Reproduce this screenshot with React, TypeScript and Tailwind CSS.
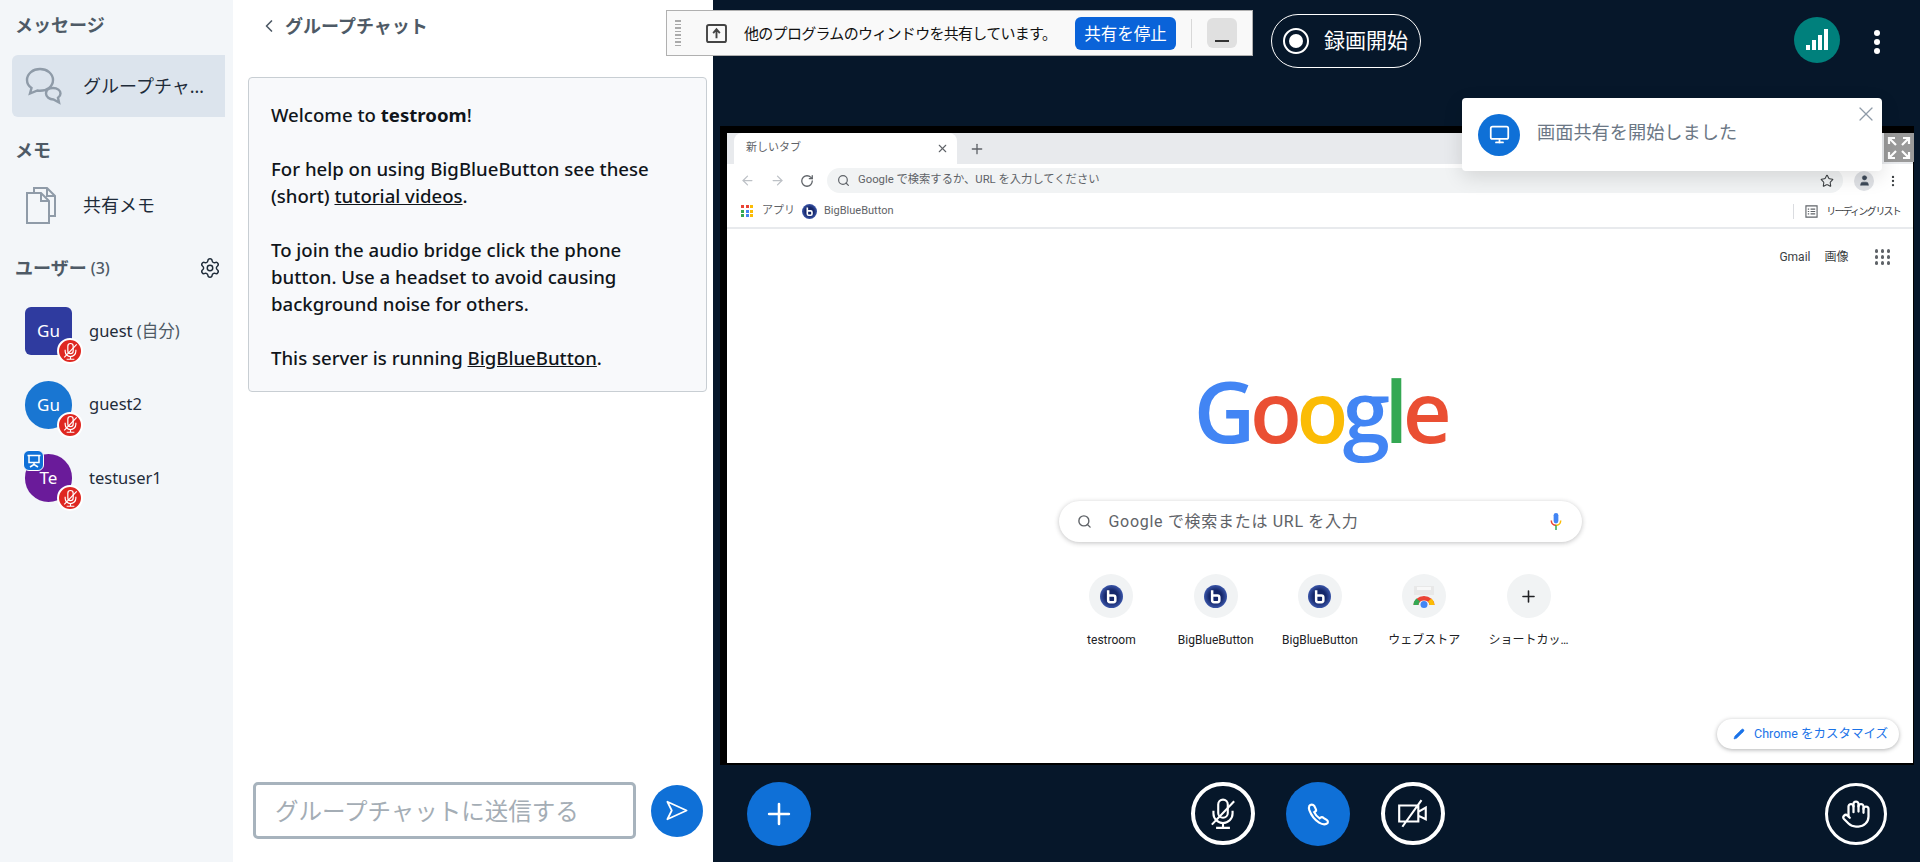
import React from "react";
import { ChevronLeft, Hand, Monitor, Search, Settings, Star, X, Plus, ArrowLeft, ArrowRight, RotateCw, User, EllipsisVertical, Pencil } from "lucide-react";

const MicOffIcon = ({ className }: { className?: string }) => (
  <svg viewBox="0 0 32 32" fill="none" stroke="currentColor" strokeWidth="2" className={className}>
    <rect x="11.5" y="2.5" width="9" height="17" rx="4.5" />
    <path d="M7 13v2.5a9 9 0 0 0 18 0V13M16 24.5V28M9.5 29h13M5.5 26 26.5 4" />
  </svg>
);

const CameraOffIcon = ({ className }: { className?: string }) => (
  <svg viewBox="0 0 32 32" fill="none" stroke="currentColor" strokeWidth="2" className={className}>
    <path d="M3 8h18v15H3zM21 14l7-4v11l-7-3.5M6 28 24 3" />
  </svg>
);

const PhoneIcon = () => (
  <svg viewBox="0 0 24 24" fill="none" stroke="white" strokeWidth="2" className="h-[26px] w-[26px]">
    <path d="M4 4.500C5 3 7.500 3 8.500 4.500L10 7.500C10.500 8.500 10 9.500 9 10L8.500 10.300C9.500 12.500 11 14.500 13.500 16L14 15.500C15 14.800 16.500 15 17 15.500L20 17.500C21.500 18.500 21.500 20.500 20 21C18 22 15.500 21.500 13 20C9 17.500 5.500 12.500 4 8.500C3.500 7 3.500 5.500 4 4.500Z" />
  </svg>
);

const ChatIcon = () => (
  <svg viewBox="0 0 38 38" fill="none" stroke="#8f9ba8" strokeWidth="2.4" className="h-[38px] w-[38px]">
    <path d="M15 2C8 2 2 6.500 2 13c0 3.500 2 6.300 4.500 8L5 26.500 12.500 23.500c1 .2 1.800.3 2.500.3 7 0 13-4.300 13-10.800S22 2 15 2z" />
    <path d="M28 21c4.500 0 7.500 2.500 7.500 5.500 0 1.800-1 3.300-2.500 4.300l1 4.700-5.500-3c-4 0-7.500-2.500-7.500-6s3-5.500 7-5.500z" fill="#dce4ed" />
  </svg>
);

const FilesIcon = () => (
  <svg viewBox="0 0 32 38" fill="none" stroke="#8f9ba8" strokeWidth="2" className="h-[38px] w-[32px]">
    <path d="M9 6V2h13l8 8v20h-6" />
    <path d="M22 2v8h8" />
    <path d="M2 7h14l8 8v22H2z" fill="#f3f6f9" />
    <path d="M16 7v8h8" />
  </svg>
);

const SendIcon = () => (
  <svg viewBox="0 0 26 24" fill="none" stroke="white" strokeWidth="2" className="h-[21px] w-[24px]">
    <path d="M2 2 24 12 2 22 7 12z" strokeLinejoin="round" />
  </svg>
);

const BbbLogo = ({ size }: { size: number }) => (
  <svg viewBox="0 0 24 24" width={size} height={size}>
    <defs>
      <radialGradient id="bbb-fill">
        <stop offset="0.55" stopColor="#15276a" />
        <stop offset="1" stopColor="#3a55a8" />
      </radialGradient>
    </defs>
    <circle cx="12" cy="12" r="12" fill="url(#bbb-fill)" />
    <path d="M8.500 5.500v10.500a2 2 0 0 0 2 2h3.500a2 2 0 0 0 2-2v-3a2 2 0 0 0-2-2H9" fill="none" stroke="white" strokeWidth="2.600" />
  </svg>
);

const WebStoreIcon = () => (
  <svg viewBox="0 0 24 24" className="h-[24px] w-[24px]">
    <rect x="2" y="2" width="20" height="9" fill="#e8e8e8" />
    <rect x="5" y="3" width="14" height="3" fill="#f8f8f8" />
    <path d="M1.500 21a10.500 9 0 0 1 10.500-9 10.500 9 0 0 1 10.500 9h-5a5.500 4.500 0 0 0-5.500-4.500A5.500 4.500 0 0 0 6.500 21z" fill="#ea4335" />
    <path d="M1.500 21a10.500 9 0 0 1 3-6.500l3.500 3a5.500 4.500 0 0 0-1.500 3.500z" fill="#34a853" />
    <path d="M22.500 21a10.500 9 0 0 0-3-6.500L16 17.500a5.500 4.500 0 0 1 1.500 3.500z" fill="#fbbc05" />
    <circle cx="12" cy="20.500" r="3.500" fill="#4285f4" />
  </svg>
);

const MutedBadge = () => (
  <div className="absolute right-[-11px] bottom-[-9px] flex h-[26px] w-[26px] items-center justify-center rounded-full border-2 border-white bg-[#df2721] text-white">
    <MicOffIcon className="h-[19px] w-[19px]" />
  </div>
);

const users = [
  { name: "guest", self: true, initials: "Gu", shape: "rounded-md bg-[#2f3b9f]" },
  { name: "guest2", self: false, initials: "Gu", shape: "rounded-full bg-[#1976d2]" },
  { name: "testuser1", self: false, initials: "Te", shape: "rounded-full bg-[#6a1b9a]", presenter: true },
];

const shortcuts = ["testroom", "BigBlueButton", "BigBlueButton", "ウェブストア", "ショートカッ…"];

const gridColors = ["#ea4335", "#ea4335", "#fbbc05", "#34a853", "#4285f4", "#fbbc05", "#34a853", "#4285f4", "#fbbc05"];

const RoundBtn = ({ children }: { children: React.ReactNode }) => (
  <div className="flex h-[63px] w-[64px] items-center justify-center rounded-full border-[4px] border-white text-white">{children}</div>
);

const ChromeWindow = () => (
  <div className="flex h-full flex-col bg-white font-['Roboto','Noto_Sans_CJK_JP',sans-serif] text-[#5f6368]">
    <div className="flex h-[31px] items-end bg-[#e8eaed] pl-[7px]">
      <div className="flex h-[31px] w-[223px] items-center justify-between rounded-t-lg bg-white pr-[8px] pl-[12px] text-[11px]">
        <span>新しいタブ</span>
        <X size={13} strokeWidth={2} />
      </div>
      <Plus size={16} strokeWidth={2} className="mb-[7px] ml-[12px]" />
    </div>
    <div className="flex h-[30px] items-center pt-[3px] pr-[13px] pl-[13px]">
      <ArrowLeft size={15} className="text-[#bdc1c6]" />
      <ArrowRight size={15} className="ml-[15px] text-[#bdc1c6]" />
      <RotateCw size={14} strokeWidth={2.2} className="ml-[15px]" />
      <div className="ml-[13px] flex h-[25px] flex-1 items-center rounded-full bg-[#f1f3f4] pl-[10px] text-[11.300px]">
        <Search size={13} strokeWidth={2.2} />
        <span className="ml-[8px]">Google で検索するか、URL を入力してください</span>
        <Star size={14} strokeWidth={1.8} className="mr-[9px] ml-auto text-[#3c4043]" />
      </div>
      <div className="ml-[11px] flex h-[20px] w-[20px] items-center justify-center rounded-full bg-[#dfe1e5]">
        <User size={13} fill="#3c4858" strokeWidth={1} className="text-[#3c4858]" />
      </div>
      <EllipsisVertical size={14} className="ml-[12px] text-[#3c4043]" />
    </div>
    <div className="flex h-[35px] items-center border-b-2 border-[#e8eaed] pt-[1px] pr-[13px] pl-[14px] text-[11px]">
      <div className="grid h-[12px] w-[12px] grid-cols-3 gap-[1.500px]">
        {gridColors.map((c, i) => (
          <div key={i} style={{ backgroundColor: c }} />
        ))}
      </div>
      <span className="ml-[9px]">アプリ</span>
      <span className="ml-[7px]"><BbbLogo size={15} /></span>
      <span className="ml-[7px]">BigBlueButton</span>
      <div className="ml-auto h-[15px] w-px bg-[#dadce0]" />
      <svg viewBox="0 0 14 14" fill="none" stroke="#5f6368" strokeWidth="1.200" className="ml-[11px] h-[13px] w-[13px]">
        <path d="M1 1h12v12H1zM3 4.500h1.500M6 4.500h5M3 7h1.500M6 7h5M3 9.500h1.500M6 9.500h5" />
      </svg>
      <span className="ml-[8px] text-[10px] tracking-[-1.800px] text-[#3c4043]">リーディング リスト</span>
    </div>
    <div className="relative flex flex-1 flex-col items-center">
      <div className="flex h-[56px] items-center self-end pr-[23px] text-[12px] text-[#3c4043]">
        <span>Gmail</span>
        <span className="ml-[14px]">画像</span>
        <div className="ml-[26px] grid grid-cols-3 gap-[2.500px]">
          {Array.from({ length: 9 }).map((_, i) => (
            <div key={i} className="h-[3.500px] w-[3.500px] rounded-full bg-[#5f6368]" />
          ))}
        </div>
      </div>
      <div className="mt-[80px] flex h-[90px] items-center font-['Open_Sans',sans-serif] text-[85px] leading-none font-semibold tracking-[-5.500px]">
        <span className="text-[#4285f4]">G</span>
        <span className="text-[#ea4f33]">o</span>
        <span className="text-[#fbbc05]">o</span>
        <span className="text-[#4285f4]">g</span>
        <span className="text-[#34a853]">l</span>
        <span className="text-[#ea4f33]">e</span>
      </div>
      <div className="mt-[46px] flex h-[41px] w-[523px] items-center rounded-full bg-white pr-[20px] pl-[18px] text-[16px] tracking-[0.7px] text-[#5f6368] shadow-[0_1px_5px_rgba(32,33,36,0.28)]">
        <Search size={15} strokeWidth={2.2} />
        <span className="ml-[17px]">Google で検索または URL を入力</span>
        <svg viewBox="0 0 12 18" className="ml-auto h-[17px] w-[12px]">
          <rect x="3.500" y="0" width="5" height="11" rx="2.500" fill="#4285f4" />
          <path d="M1 8a5 5 0 0 0 5 5" fill="none" stroke="#ea4335" strokeWidth="1.600" />
          <path d="M11 8a5 5 0 0 1-5 5" fill="none" stroke="#fbbc05" strokeWidth="1.600" />
          <path d="M6 13v5" stroke="#34a853" strokeWidth="1.600" />
        </svg>
      </div>
      <div className="mt-[32px] flex">
        {shortcuts.map((s, i) => (
          <div key={i} className="flex w-[104.300px] flex-col items-center">
            <div className="flex h-[44px] w-[44px] items-center justify-center rounded-full bg-[#f1f3f4]">
              {i < 3 && <BbbLogo size={23} />}
              {i === 3 && <WebStoreIcon />}
              {i === 4 && <Plus size={19} strokeWidth={2} className="text-[#202124]" />}
            </div>
            <span className="mt-[13px] text-[12px] text-[#202124]">{s}</span>
          </div>
        ))}
      </div>
      <div className="absolute right-[14px] bottom-[14px] flex h-[30px] w-[182px] items-center rounded-full bg-white pl-[16px] text-[12.500px] text-[#1a73e8] shadow-[0_1px_4px_rgba(32,33,36,0.35)]">
        <Pencil size={12} fill="#1a73e8" strokeWidth={1} />
        <span className="ml-[9px]">Chrome をカスタマイズ</span>
      </div>
    </div>
  </div>
);

const App = () => {
  return (
    <div className="relative flex h-[862px] w-[1920px] overflow-hidden font-['Noto_Sans','Noto_Sans_CJK_JP',sans-serif]">
      {/* sidebar */}
      <div className="flex w-[233px] flex-col bg-[#f3f6f9] text-[#1f2c3a]">
        <div className="flex h-[50px] items-center pl-[15px] text-[18px] font-bold text-[#4e5a66]">メッセージ</div>
        <div className="mt-[5px] ml-[12px] flex h-[62px] w-[213px] items-center rounded-l-[6px] bg-[#dce4ed] pl-[13px] text-[18px]">
          <ChatIcon />
          <span className="ml-[20px] w-[130px] truncate">グループチャット</span>
        </div>
        <div className="mt-[11px] flex h-[44px] items-center pl-[15px] text-[18px] font-bold text-[#4e5a66]">メモ</div>
        <div className="mt-[2px] ml-[12px] flex h-[62px] items-center pl-[13px] text-[18px]">
          <FilesIcon />
          <span className="ml-[26px]">共有メモ</span>
        </div>
        <div className="mt-[16px] flex h-[32px] items-center pr-[12px] pl-[15px] text-[#4e5a66]">
          <span className="text-[18px] font-bold">ユーザー</span>
          <span className="ml-[4px] text-[16px] font-medium">(3)</span>
          <Settings size={22} strokeWidth={1.6} className="ml-auto text-[#1f2c3a]" />
        </div>
        <div className="mt-[23px] flex flex-col gap-[25.500px] pl-[25px]">
          {users.map((u) => (
            <div key={u.name} className="flex h-[48px] items-center">
              <div className={`relative flex h-[48px] w-[47px] items-center justify-center text-[17px] text-white ${u.shape}`}>
                {u.initials}
                {u.presenter && (
                  <div className="absolute top-[-4px] left-[-2px] flex h-[21px] w-[21px] items-center justify-center rounded-md border border-white bg-[#0f70d7]">
                    <svg viewBox="0 0 16 16" fill="none" stroke="white" strokeWidth="1.500" className="h-[16px] w-[16px]">
                      <path d="M1.500 2.500h13M3 2.500v7h10v-7M8 9.500v2M4 14l4-2.500 4 2.500" />
                    </svg>
                  </div>
                )}
                <MutedBadge />
              </div>
              <span className="ml-[17px] text-[16.500px]">
                {u.name}
                {u.self && <span className="text-[#4e5a66]"> (自分)</span>}
              </span>
            </div>
          ))}
        </div>
      </div>

      {/* chat */}
      <div className="flex w-[480px] flex-col bg-white">
        <div className="flex h-[52px] items-center pl-[26px] text-[18px] font-bold text-[#4e5a66]">
          <ChevronLeft size={20} strokeWidth={2} />
          <span className="ml-[6px]">グループチャット</span>
        </div>
        <div className="mt-[25px] mr-[6px] ml-[15px] h-[315px] rounded border border-[#c8ced3] bg-[#f8f9fb] px-[22px] py-[23px] text-[18.600px] leading-[27px] font-medium text-[#10151a]">
          Welcome to <b>testroom</b>!<br />
          <br />
          For help on using BigBlueButton see these
          <br />
          (short) <u>tutorial videos</u>.<br />
          <br />
          To join the audio bridge click the phone
          <br />
          button. Use a headset to avoid causing
          <br />
          background noise for others.
          <br />
          <br />
          This server is running <u>BigBlueButton</u>.
        </div>
        <div className="mt-auto mb-[23px] ml-[20px] flex items-center">
          <input
            readOnly
            placeholder="グループチャットに送信する"
            className="h-[57px] w-[383px] rounded-[5px] border-[3px] border-[#a7b3bd] pl-[19px] text-[23.500px] outline-none placeholder:text-[#a4adb5]"
          />
          <div className="ml-[15px] flex h-[52px] w-[52px] items-center justify-center rounded-full bg-[#0f70d7]">
            <SendIcon />
          </div>
        </div>
      </div>

      {/* main */}
      <div className="flex flex-1 flex-col bg-[#06172a]">
        <div className="flex h-[126px] items-start">
          <div className="mt-[14px] ml-[558px] flex h-[54px] w-[150px] items-center rounded-full border border-white pl-[11px] text-[21px] text-white">
            <div className="flex h-[26px] w-[26px] items-center justify-center rounded-full border-2 border-white">
              <div className="h-[14px] w-[14px] rounded-full bg-white" />
            </div>
            <span className="ml-[15px]">録画開始</span>
          </div>
          <div className="mt-[17px] ml-auto flex h-[46px] w-[46px] items-end justify-center gap-[2px] rounded-full bg-[#00807c] pb-[13px]">
            <div className="h-[5px] w-[4px] bg-white" />
            <div className="h-[10px] w-[4px] bg-white" />
            <div className="h-[15px] w-[4px] bg-white" />
            <div className="h-[21px] w-[4px] bg-white" />
          </div>
          <div className="mt-[30px] mr-[40px] ml-[34px] flex flex-col gap-[3px]">
            <div className="h-[6px] w-[6px] rounded-full bg-white" />
            <div className="h-[6px] w-[6px] rounded-full bg-white" />
            <div className="h-[6px] w-[6px] rounded-full bg-white" />
          </div>
        </div>

        <div className="relative mr-[6px] ml-[7px] h-[639px] bg-black pt-[7px] pr-[1px] pb-[2px] pl-[7px]">
          <ChromeWindow />
          <div className="absolute top-[7px] right-0 flex h-[29px] w-[30px] items-center justify-center bg-[#9a9a9a] text-white">
            <svg viewBox="0 0 24 24" fill="none" stroke="white" strokeWidth="2.200" className="h-[24px] w-[24px]">
              <path d="M2 8V2h6M22 8V2h-6M2 16v6h6M22 16v6h-6M2 2l7 7M22 2l-7 7M2 22l7-7M22 22l-7-7" />
            </svg>
          </div>
        </div>

        <div className="flex flex-1 items-center justify-between pr-[33px] pl-[34px]">
          <div className="flex h-[64px] w-[64px] items-center justify-center rounded-full bg-[#0f70d7] text-white">
            <Plus size={34} strokeWidth={1.800} />
          </div>
          <div className="flex items-center gap-[31px]">
            <RoundBtn>
              <MicOffIcon className="h-[34px] w-[34px]" />
            </RoundBtn>
            <div className="flex h-[64px] w-[64px] items-center justify-center rounded-full bg-[#0f70d7] text-white">
              <PhoneIcon />
            </div>
            <RoundBtn>
              <CameraOffIcon className="h-[34px] w-[34px]" />
            </RoundBtn>
          </div>
          <div className="flex h-[62px] w-[62px] items-center justify-center rounded-full border-[3px] border-white text-white">
            <Hand size={30} strokeWidth={1.800} />
          </div>
        </div>
      </div>

      {/* floating browser share bar */}
      <div className="absolute top-[10px] left-[666px] flex h-[46px] w-[587px] items-center border border-[#b0b0b0] bg-[#f9f9f9] font-['Noto_Sans_CJK_JP',sans-serif] text-[15px] tracking-[-0.7px] text-[#111]">
        <div className="ml-[8px] flex flex-col gap-[2px]">
          {Array.from({ length: 8 }).map((_, i) => (
            <div key={i} className="h-[1.500px] w-[6px] bg-[#aaa]" />
          ))}
        </div>
        <svg viewBox="0 0 22 20" fill="none" stroke="#444" strokeWidth="2" className="ml-[24px] h-[19px] w-[23px]">
          <rect x="1" y="1" width="20" height="18" rx="2" />
          <path d="M11 15V6M7.500 9.500 11 5.500l3.500 4" />
        </svg>
        <span className="ml-[16px] w-[305px] whitespace-nowrap">他のプログラムのウィンドウを共有しています。</span>
        <div className="ml-[26px] flex h-[33px] w-[101px] items-center justify-center rounded-[6px] bg-[#0a63d9] text-[16.500px] tracking-normal text-white">共有を停止</div>
        <div className="ml-[15px] h-[29px] w-px bg-[#d8d8d8]" />
        <div className="ml-[15px] flex h-[30px] w-[30px] items-end justify-center rounded-[6px] bg-[#e0e0e0] pb-[6px]">
          <div className="h-[2px] w-[14px] bg-[#333]" />
        </div>
      </div>

      {/* toast */}
      <div className="absolute top-[98px] left-[1462px] flex h-[73px] w-[420px] items-center rounded bg-white pb-[3px] pl-[16px] text-[18.200px] text-[#6b7785] shadow-[0_6px_20px_rgba(0,0,0,0.12)]">
        <div className="mt-[3px] flex h-[42px] w-[42px] items-center justify-center rounded-full bg-[#0f70d7] text-white">
          <Monitor size={21} strokeWidth={2} />
        </div>
        <span className="ml-[17px]">画面共有を開始しました</span>
        <X size={24} strokeWidth={1.200} className="absolute top-[4px] right-[4px] text-[#8f9ba8]" />
      </div>
    </div>
  );
};

export default App;
